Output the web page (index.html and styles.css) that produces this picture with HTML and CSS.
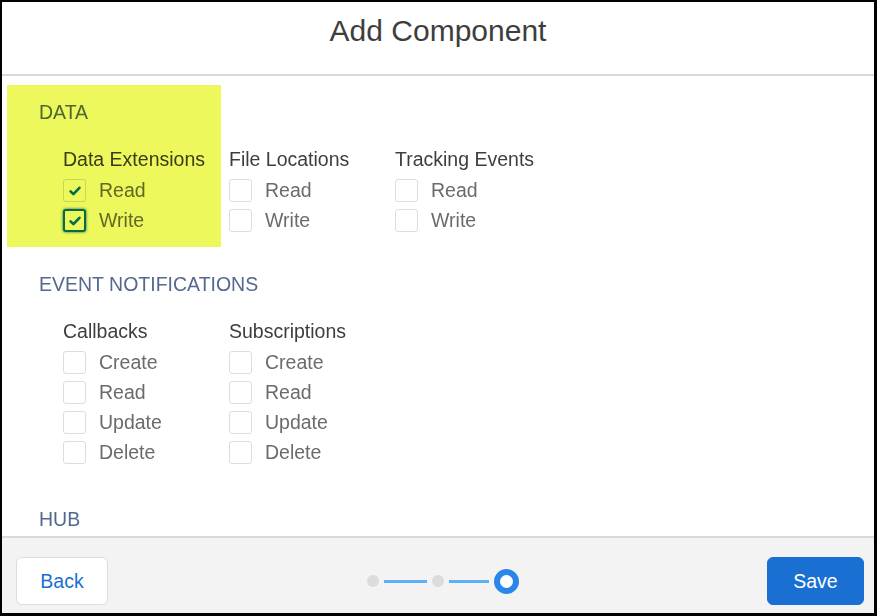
FILE: index.html
```html
<!DOCTYPE html>
<html lang="en">
<head>
<meta charset="utf-8">
<title>Add Component</title>
<link rel="stylesheet" href="styles.css">
</head>
<body>
<div class="modal">
  <header class="modal-header">
    <h2 class="modal-title">Add Component</h2>
  </header>
  <main class="modal-body">
    <div class="highlight"></div>
    <section class="perm-section">
      <h3 class="section-title">DATA</h3>
      <div class="groups">
        <div class="group">
          <h4 class="group-title">Data Extensions</h4>
          <label class="opt"><span class="cb checked"><svg viewBox="0 0 12 10" width="12" height="10"><polyline points="1.6,5.4 4.4,8.2 10.4,1.8" fill="none" stroke="#0070d2" stroke-width="2.6" stroke-linecap="round" stroke-linejoin="round"/></svg></span>Read</label>
          <label class="opt"><span class="cb checked focus"><svg viewBox="0 0 12 10" width="12" height="10"><polyline points="1.6,5.4 4.4,8.2 10.4,1.8" fill="none" stroke="#0070d2" stroke-width="2.6" stroke-linecap="round" stroke-linejoin="round"/></svg></span>Write</label>
        </div>
        <div class="group">
          <h4 class="group-title">File Locations</h4>
          <label class="opt"><span class="cb"></span>Read</label>
          <label class="opt"><span class="cb"></span>Write</label>
        </div>
        <div class="group">
          <h4 class="group-title">Tracking Events</h4>
          <label class="opt"><span class="cb"></span>Read</label>
          <label class="opt"><span class="cb"></span>Write</label>
        </div>
      </div>
    </section>
    <section class="perm-section">
      <h3 class="section-title">EVENT NOTIFICATIONS</h3>
      <div class="groups">
        <div class="group">
          <h4 class="group-title">Callbacks</h4>
          <label class="opt"><span class="cb"></span>Create</label>
          <label class="opt"><span class="cb"></span>Read</label>
          <label class="opt"><span class="cb"></span>Update</label>
          <label class="opt"><span class="cb"></span>Delete</label>
        </div>
        <div class="group">
          <h4 class="group-title">Subscriptions</h4>
          <label class="opt"><span class="cb"></span>Create</label>
          <label class="opt"><span class="cb"></span>Read</label>
          <label class="opt"><span class="cb"></span>Update</label>
          <label class="opt"><span class="cb"></span>Delete</label>
        </div>
      </div>
    </section>
    <section class="perm-section perm-section-last">
      <h3 class="section-title">HUB</h3>
    </section>
  </main>
  <footer class="modal-footer">
    <button class="btn btn-neutral">Back</button>
    <div class="progress-wrap">
      <div class="progress">
        <span class="step done"></span>
        <span class="bar bar-1"></span>
        <span class="step done"></span>
        <span class="bar bar-2"></span>
        <span class="step current"></span>
      </div>
    </div>
    <button class="btn btn-brand">Save</button>
  </footer>
</div>
</body>
</html>
```

FILE: styles.css
```css
html, body {
  margin: 0;
  padding: 0;
  background: #000;
}

.modal {
  width: 877px;
  height: 616px;
  box-sizing: border-box;
  border-style: solid;
  border-color: #000;
  border-width: 2px 3px 3px 2px;
  background: #fff;
  display: flex;
  flex-direction: column;
  font-family: "Liberation Sans", Arial, Helvetica, sans-serif;
  overflow: hidden;
}

.modal-header {
  height: 72px;
  flex: none;
  border-bottom: 2px solid #d9d9d9;
  text-align: center;
}

.modal-title {
  margin: 0;
  padding-top: 11px;
  font-size: 30px;
  line-height: 36px;
  font-weight: normal;
  color: #3e3e3c;
}

.modal-body {
  position: relative;
  flex: 1;
  overflow: hidden;
  padding: 21px 0 0 37px;
  isolation: isolate;
}

.highlight {
  position: absolute;
  left: 5px;
  top: 9px;
  width: 214px;
  height: 162px;
  background: #ecf85b;
  mix-blend-mode: multiply;
  z-index: 2;
  pointer-events: none;
}

.perm-section + .perm-section {
  margin-top: 34px;
}

.perm-section + .perm-section-last {
  margin-top: 37px;
}

.section-title {
  margin: 0;
  font-size: 19.5px;
  line-height: 30px;
  font-weight: normal;
  color: #54698d;
}

.groups {
  display: flex;
  margin: 17px 0 0 24px;
}

.group {
  width: 166px;
  display: flex;
  flex-direction: column;
}

.group-title {
  margin: 0 0 1px 0;
  font-size: 19.5px;
  line-height: 30px;
  font-weight: normal;
  color: #3e3e3c;
  white-space: nowrap;
}

.opt {
  display: flex;
  align-items: center;
  gap: 13px;
  height: 30px;
  font-size: 19.5px;
  color: #6b6b6b;
}

.cb {
  width: 23px;
  height: 23px;
  box-sizing: border-box;
  border: 1px solid #d8dde6;
  border-radius: 3px;
  background: #fff;
  display: flex;
  align-items: center;
  justify-content: center;
  flex: none;
}

.cb svg {
  display: block;
  margin-top: 2px;
}

.cb.focus {
  border: 2px solid #0a6bc4;
  box-shadow: 0 0 3px #0070d2;
}

.modal-footer {
  flex: none;
  height: 77px;
  box-sizing: border-box;
  border-top: 2px solid #d9d9d9;
  background: #f3f3f3;
  display: flex;
  align-items: flex-start;
  padding: 19px 10px 0 14px;
}

.btn {
  height: 48px;
  box-sizing: border-box;
  font-family: "Liberation Sans", Arial, Helvetica, sans-serif;
  font-size: 19.5px;
  border-radius: 6px;
  padding: 0;
  cursor: pointer;
}

.btn-neutral {
  width: 92px;
  background: #fff;
  border: 1px solid #d8dde6;
  color: #1b6ed3;
}

.btn-brand {
  width: 97px;
  background: #1a6fd2;
  border: 1px solid #1a6fd2;
  color: #fff;
}

.progress-wrap {
  flex: 1;
  display: flex;
  justify-content: center;
  align-items: center;
  height: 48px;
  padding-left: 11px;
}

.progress {
  display: flex;
  align-items: center;
  gap: 5px;
}

.step.done {
  width: 12px;
  height: 12px;
  border-radius: 50%;
  background: #dcdcdc;
}

.bar {
  height: 3px;
  background: #5eb0f7;
}

.bar-1 { width: 43px; }
.bar-2 { width: 40px; }

.step.current {
  width: 25px;
  height: 25px;
  box-sizing: border-box;
  border-radius: 50%;
  border: 6px solid #2a86e8;
  background: #fff;
}
```
